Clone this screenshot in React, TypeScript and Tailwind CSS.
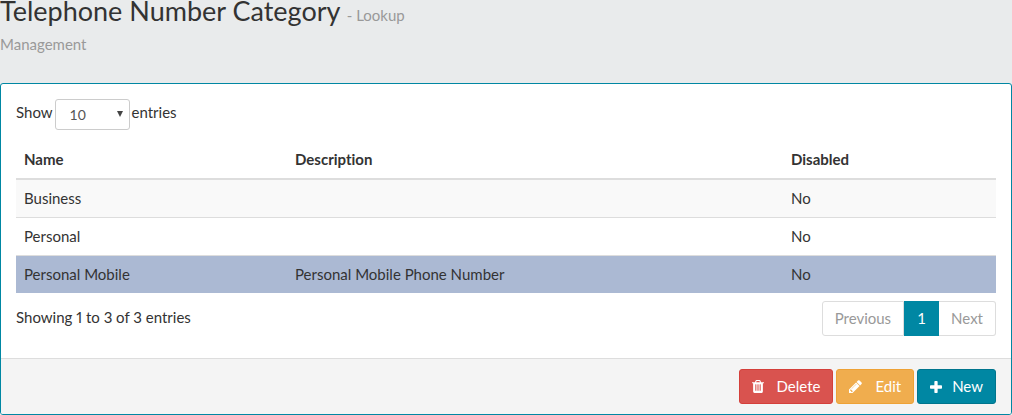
interface Category {
  name: string;
  description: string;
  disabled: boolean;
}

const categories: Category[] = [
  { name: "Business", description: "", disabled: false },
  { name: "Personal", description: "", disabled: false },
  { name: "Personal Mobile", description: "Personal Mobile Phone Number", disabled: false }
];

const selectedName = "Personal Mobile";

function rowColor(category: Category, index: number): string {
  if (category.name === selectedName) return "bg-[#abb9d3]";
  return index % 2 === 0 ? "bg-[#f9f9f9]" : "bg-white";
}

function TrashIcon() {
  return (
    <svg viewBox="0 128 1408 1536" className="h-[13px] w-3 fill-current" aria-hidden="true">
      <path d="M512 1376v-704q0-14-9-23t-23-9h-64q-14 0-23 9t-9 23v704q0 14 9 23t23 9h64q14 0 23-9t9-23zm256 0v-704q0-14-9-23t-23-9h-64q-14 0-23 9t-9 23v704q0 14 9 23t23 9h64q14 0 23-9t9-23zm256 0v-704q0-14-9-23t-23-9h-64q-14 0-23 9t-9 23v704q0 14 9 23t23 9h64q14 0 23-9t9-23zm-544-992h448l-48-117q-7-9-17-11h-317q-10 2-17 11zm928 32v64q0 14-9 23t-23 9h-96v948q0 83-47 143.5t-113 60.5h-832q-66 0-113-58.5t-47-141.5v-952h-96q-14 0-23-9t-9-23v-64q0-14 9-23t23-9h309l70-167q15-37 54-63t79-26h320q40 0 79 26t54 63l70 167h309q14 0 23 9t9 23z" />
    </svg>
  );
}

function PencilIcon() {
  return (
    <svg viewBox="0 128 1536 1536" className="size-[13px] fill-current" aria-hidden="true">
      <path d="M363 1536l91-91-235-235-91 91v107h128v128h107zm523-928q0-22-22-22-10 0-17 7l-542 542q-7 7-7 17 0 22 22 22 10 0 17-7l542-542q7-7 7-17zm-54-192l416 416-832 832h-416v-416zm683 96q0 53-37 90l-166 166-416-416 166-165q36-38 90-38 53 0 91 38l235 234q37 39 37 91z" />
    </svg>
  );
}

function PlusIcon() {
  return (
    <svg viewBox="0 192 1408 1408" className="size-3 fill-current" aria-hidden="true">
      <path d="M1408 800v192q0 40-28 68t-68 28h-416v416q0 40-28 68t-68 28h-192q-40 0-68-28t-28-68v-416h-416q-40 0-68-28t-28-68v-192q0-40 28-68t68-28h416v-416q0-40 28-68t68-28h192q40 0 68 28t28 68v416h416q40 0 68 28t28 68z" />
    </svg>
  );
}

function PageHeading() {
  return (
    <header className="pb-7">
      <h1 className="text-[27px] leading-[22px]">
        Telephone Number Category <small className="text-[15px] text-[#999]">- Lookup</small>
        <small className="mt-2 block text-[15px] leading-[21px] text-[#999]">Management</small>
      </h1>
    </header>
  );
}

function CategoryTable() {
  return (
    <table className="mt-[10px] w-full table-fixed border-collapse text-left">
      <thead>
        <tr className="h-[39px] border-b-2 border-[#ddd]">
          <th className="w-[271px] px-2 font-bold">Name</th>
          <th className="px-2 font-bold">Description</th>
          <th className="w-[213px] px-2 font-bold">Disabled</th>
        </tr>
      </thead>
      <tbody>
        {categories.map((category, index) => (
          <tr key={category.name} className={`h-[38px] border-t border-[#ddd] ${rowColor(category, index)}`}>
            <td className="px-2">{category.name}</td>
            <td className="px-2">{category.description}</td>
            <td className="px-2">{category.disabled ? "Yes" : "No"}</td>
          </tr>
        ))}
      </tbody>
    </table>
  );
}

export default function App() {
  return (
    <main className="bg-[#e9ebec] font-['Lato',sans-serif] text-[15px] leading-[21px] text-[#333] [font-variant-ligatures:none]">
      <PageHeading />
      <section className="overflow-hidden rounded-[3px] border border-[#0087a3] bg-white">
        <div className="px-[15px] pt-[15px] pb-[22px]">
          <label className="flex items-start gap-[2px] leading-[27px]">
            Show
            <span className="relative">
              <select
                defaultValue="10"
                className="block h-[31px] w-[75px] appearance-none rounded-[3px] border border-[#ccc] bg-white pl-[14px] text-[14px] text-[#555]"
              >
                <option>10</option>
                <option>25</option>
                <option>50</option>
                <option>100</option>
              </select>
              <svg viewBox="0 0 6 6" className="pointer-events-none absolute top-3 right-[7px] size-[6px] fill-[#444]" aria-hidden="true">
                <path d="M0 0h6L3 6z" />
              </svg>
            </span>
            entries
          </label>
          <CategoryTable />
          <div className="mt-2 flex items-start justify-between">
            <p className="mt-[6px] proportional-nums">Showing 1 to 3 of 3 entries</p>
            <nav className="flex h-[35px] text-[#999]" aria-label="Pages">
              <button type="button" className="rounded-l-[3px] border border-[#ddd] px-3">Previous</button>
              <button type="button" aria-current="page" className="w-[35px] bg-[#0087a3] text-white">1</button>
              <button type="button" className="rounded-r-[3px] border border-l-0 border-[#ddd] px-3">Next</button>
            </nav>
          </div>
        </div>
        <footer className="flex justify-end gap-[3px] border-t border-[#ddd] bg-[#f4f4f4] px-[15px] py-[10px] text-white">
          <button type="button" className="flex h-[35px] items-center gap-[13px] rounded-[3px] border border-[#d43f3a] bg-[#d9534f] px-3">
            <TrashIcon />
            Delete
          </button>
          <button type="button" className="flex h-[35px] items-center gap-[13px] rounded-[3px] border border-[#eea236] bg-[#f0ad4e] px-3">
            <PencilIcon />
            Edit
          </button>
          <button type="button" className="flex h-[35px] items-center gap-[10px] rounded-[3px] border border-[#00758d] bg-[#0087a3] px-3">
            <PlusIcon />
            New
          </button>
        </footer>
      </section>
    </main>
  );
}
